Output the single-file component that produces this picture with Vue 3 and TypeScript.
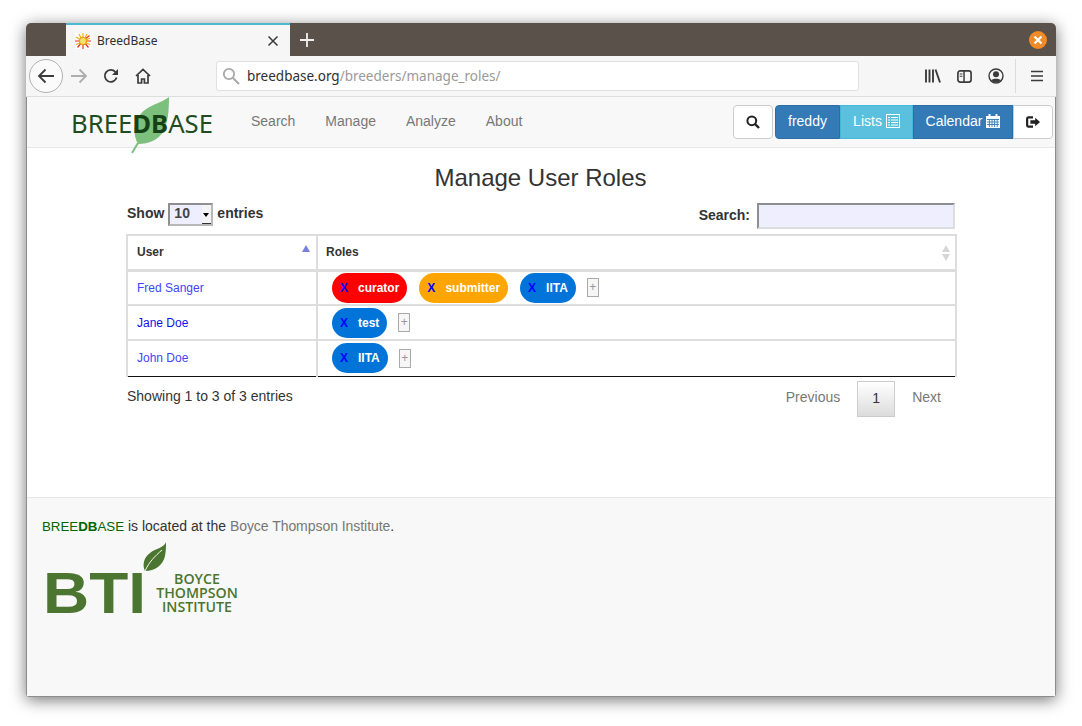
<template>
  <div class="window">
    <div class="titlebar">
      <div class="tab">
        <svg class="favicon" width="16" height="16" viewBox="0 0 16 16">
          <rect width="16" height="16" fill="#fff" />
          <g stroke="#e8321a" stroke-width="1.2">
            <path d="M8 9v7M9 9l4.500 5.500M9 8h7M9 7l5.500-4.500M7 9l-4.500 5.500M7 8H0" />
          </g>
          <g stroke="#f5a81c" stroke-width="1.200">
            <path d="M8 0v6M4 1l2.500 5M12 1L9.500 6M1 4l4 2.500M15 5l-4 2M1 11.500L5 10M15 11.500L11 10" />
          </g>
          <circle cx="8" cy="8" r="3.6" fill="#fbe36a" stroke="#e9a21a" stroke-width="1.400" />
        </svg>
        <span class="tab-title">BreedBase</span>
        <svg class="tab-close" width="12" height="12" viewBox="0 0 12 12">
          <path d="M1.500 1.500l9 9M10.500 1.500l-9 9" stroke="#3a3a3a" stroke-width="1.500" fill="none" />
        </svg>
      </div>
      <svg class="new-tab" width="16" height="16" viewBox="0 0 16 16">
        <path d="M8 1v14M1 8h14" stroke="#f2f0ee" stroke-width="1.800" fill="none" />
      </svg>
      <div class="win-close">
        <svg width="10" height="10" viewBox="0 0 10 10">
          <path d="M1.500 1.500l7 7M8.500 1.500l-7 7" stroke="#fff" stroke-width="2.200" fill="none" />
        </svg>
      </div>
    </div>

    <div class="toolbar">
      <div class="back">
        <svg width="18" height="16" viewBox="0 0 18 16">
          <path d="M17 8H2M8.500 1.500L2 8l6.500 6.500" stroke="#3b3b3b" stroke-width="1.800" fill="none" />
        </svg>
      </div>
      <svg class="forward" width="18" height="16" viewBox="0 0 18 16">
        <path d="M1 8h15M9.500 1.500L16 8l-6.500 6.500" stroke="#adadad" stroke-width="1.800" fill="none" />
      </svg>
      <svg class="reload" width="16" height="16" viewBox="0 0 16 16">
        <path d="M13.600 9.500A6 6 0 1 1 12.400 4L14.600 6" stroke="#3b3b3b" stroke-width="1.800" fill="none" />
        <path d="M15 1v6H9z" fill="#3b3b3b" />
      </svg>
      <svg class="home" width="16" height="16" viewBox="0 0 16 16">
        <path d="M1 8l7-6.500L15 8M3 7v8h3.600v-4h2.800v4H13V7" stroke="#3b3b3b" stroke-width="1.700" fill="none" />
      </svg>
      <div class="urlbar">
        <svg width="18" height="18" viewBox="0 0 18 18">
          <circle cx="7" cy="7" r="5.200" stroke="#a8a8a8" stroke-width="1.800" fill="none" />
          <path d="M11 11l6 6" stroke="#a8a8a8" stroke-width="2" fill="none" />
        </svg>
        <span class="url"><span class="url-host">breedbase.org</span>/breeders/manage_roles/</span>
      </div>
      <svg class="library" width="16" height="16" viewBox="0 0 16 16">
        <path d="M1 1.500v13M4.500 1.500v13M8 1.500v13M10.500 1.500l4.500 13" stroke="#3b3b3b" stroke-width="1.900" fill="none" />
      </svg>
      <svg class="sidebar" width="15" height="13" viewBox="0 0 16 14">
        <rect x=".9" y=".9" width="14.200" height="12.200" rx="2.500" stroke="#3b3b3b" stroke-width="1.800" fill="none" />
        <path d="M7.500 1v12" stroke="#3b3b3b" stroke-width="1.600" />
        <path d="M2.800 4.200h3M2.800 6.700h3" stroke="#3b3b3b" stroke-width="1.100" />
      </svg>
      <svg class="account" width="16" height="16" viewBox="0 0 16 16">
        <circle cx="8" cy="8" r="7" stroke="#3b3b3b" stroke-width="1.400" fill="none" />
        <circle cx="8" cy="6.200" r="3" fill="#3b3b3b" />
        <path d="M3 12.500C4 10 12 10 13 12.500A7 7 0 0 1 3 12.500z" fill="#3b3b3b" />
      </svg>
      <div class="divider"></div>
      <svg class="hamburger" width="14" height="12" viewBox="0 0 14 12">
        <path d="M1 1.500h12M1 6h12M1 10.500h12" stroke="#3b3b3b" stroke-width="1.700" fill="none" />
      </svg>
    </div>

    <div class="page">
      <nav class="navbar">
        <div class="brand">
          <svg class="brand-leaf" width="40" height="58" viewBox="0 0 40 58">
            <path d="M38 0C31 6 16 8 9 18 2 26 2 38 7 47 18 47 27 43 32 35 37 26 38 14 38 0z" fill="#7dbf7d" />
            <path d="M7 46L1 56" stroke="#7dbf7d" stroke-width="2" fill="none" />
          </svg>
          <span class="brand-text">BREE<b>DB</b>ASE</span>
        </div>
        <a v-for="item in menu" :key="item" class="nav-link">{{ item }}</a>
        <div class="nav-right">
          <button class="btn btn-search">
            <svg width="14" height="14" viewBox="0 0 14 14">
              <circle cx="5.800" cy="5.800" r="4.400" stroke="#222" stroke-width="2" fill="none" />
              <path d="M9 9l4 4" stroke="#222" stroke-width="2.400" fill="none" />
            </svg>
          </button>
          <div class="btn-group">
            <button class="btn btn-primary first"><span>freddy</span></button>
            <button class="btn btn-info">
              <span>Lists</span>
              <svg width="14" height="14" viewBox="0 0 14 14">
                <rect x=".5" y=".5" width="13" height="13" fill="none" stroke="#fff" />
                <path d="M2 3.500h2M5 3.500h7M2 6h2M5 6h7M2 8.500h2M5 8.500h7M2 11h2M5 11h7" stroke="#fff" stroke-width="1.200" />
              </svg>
            </button>
            <button class="btn btn-primary calendar">
              <span>Calendar</span>
              <svg width="14" height="14" viewBox="0 0 14 14">
                <path d="M0 2h14v12H0z" fill="#fff" />
                <path d="M3.500 0v3M10.500 0v3" stroke="#fff" stroke-width="2" />
                <path d="M1 5.500h12M1 8h12M1 10.500h12M3.400 5v8M6 5v8M8.600 5v8M11.200 5v8" stroke="#337ab7" stroke-width=".9" />
              </svg>
            </button>
            <button class="btn btn-logout">
              <svg width="16" height="14" viewBox="0 0 16 14">
                <path d="M8 1.800H2.600A1.500 1.500 0 0 0 1.300 3.300v7.400A1.500 1.500 0 0 0 2.600 12.200H8" stroke="#222" stroke-width="2.500" fill="none" />
                <path d="M5 5h5.500V2.200L16 7l-5.500 4.800V9H5z" fill="#222" />
              </svg>
            </button>
          </div>
        </div>
      </nav>

      <main class="content">
        <h1>Manage User Roles</h1>
        <div class="table-controls">
          <label class="length">
            Show
            <span class="select-wrap">
              <select class="length-select">
                <option>10</option>
              </select>
              <span class="select-arrow"></span>
            </span>
            entries
          </label>
          <label class="filter">
            <span class="filter-label">Search:</span>
            <input class="filter-input" type="text" />
          </label>
        </div>

        <table class="roles">
          <thead>
            <tr>
              <th class="col-user">User<span class="sort-up"></span></th>
              <th>Roles<span class="sort-both"></span></th>
            </tr>
          </thead>
          <tbody>
            <tr v-for="row in rows" :key="row.name">
              <td class="user-cell">
                <a :class="{ visited: row.visited }">{{ row.name }}</a>
              </td>
              <td class="role-cell">
                <div class="role-list">
                  <span v-for="role in row.roles" :key="role.label" class="pill" :class="role.kind">
                    <span class="x">X</span>{{ role.label }}
                  </span>
                  <span class="add">+</span>
                </div>
              </td>
            </tr>
          </tbody>
        </table>

        <div class="table-foot">
          <span>Showing 1 to 3 of 3 entries</span>
          <div class="pager">
            <a class="page-link prev">Previous</a>
            <a class="page-current">1</a>
            <a class="page-link next">Next</a>
          </div>
        </div>
      </main>

      <footer class="footer">
        <p class="located">
          <span class="green">BREE<b>DB</b>ASE</span> is located at the <a>Boyce Thompson Institute</a>.
        </p>
        <div class="bti">
          <svg class="bti-leaf" width="26" height="30" viewBox="0 0 26 30">
            <path d="M24 0C22 6 14 6 8 11 2 15 0 23 3 29 13 29 21 23 23 14 24 9 24 4 24 0z" fill="#4b7530" />
            <path d="M3 29C7 20 13 14 20 8" stroke="#f8f8f8" stroke-width="1" fill="none" />
          </svg>
          <svg class="bti-mark" width="110" height="68" viewBox="0 0 110 68">
            <text x="0" y="54" textLength="103" lengthAdjust="spacingAndGlyphs">BTI</text>
          </svg>
          <div class="bti-name">BOYCE<br />THOMPSON<br />INSTITUTE</div>
        </div>
      </footer>
    </div>
  </div>
</template>

<script setup lang="ts">
interface Role {
  label: string
  kind: string
}

interface UserRow {
  name: string
  visited?: boolean
  roles: Role[]
}

const menu = ['Search', 'Manage', 'Analyze', 'About']

const rows: UserRow[] = [
  {
    name: 'Fred Sanger',
    roles: [
      { label: 'curator', kind: 'red' },
      { label: 'submitter', kind: 'orange' },
      { label: 'IITA', kind: 'blue' },
    ],
  },
  { name: 'Jane Doe', visited: true, roles: [{ label: 'test', kind: 'blue' }] },
  { name: 'John Doe', roles: [{ label: 'IITA', kind: 'blue' }] },
]
</script>

<style>
html,
body {
  margin: 0;
  background: #fff;
}
</style>

<style scoped>
.window {
  width: 1030px;
  height: 674px;
  margin: 23px 26px 29px;
  display: flex;
  flex-direction: column;
  border-radius: 5px 5px 3px 3px;
  overflow: hidden;
  box-shadow: 0 3px 16px rgba(0, 0, 0, 0.55);
  font-family: "Liberation Sans", Arial, sans-serif;
  color: #333;
}

.titlebar {
  height: 33px;
  flex: none;
  background: #5a514b;
  display: flex;
  align-items: center;
  padding-left: 40px;
  box-sizing: border-box;
}

.tab {
  width: 224px;
  height: 33px;
  box-sizing: border-box;
  background: #f6f6f6;
  border-top: 2px solid #4cb9cf;
  display: flex;
  align-items: center;
  padding: 0 11px 0 9px;
}

.favicon {
  margin-right: 6px;
}

.tab-title {
  flex: 1;
  font-family: "Noto Sans", sans-serif;
  font-size: 12px;
  color: #2f2f2f;
}

.new-tab {
  margin-left: 9px;
}

.win-close {
  margin-left: auto;
  margin-right: 9px;
  width: 18px;
  height: 18px;
  border-radius: 50%;
  background: #f28a27;
  display: flex;
  align-items: center;
  justify-content: center;
}

.toolbar {
  height: 41px;
  flex: none;
  box-sizing: border-box;
  background: #f6f6f6;
  border-bottom: 1px solid #dedede;
  display: flex;
  align-items: center;
  padding-left: 3px;
}

.back {
  width: 32px;
  height: 32px;
  border: 1px solid #b1b1b1;
  border-radius: 50%;
  background: #fbfbfb;
  display: flex;
  align-items: center;
  justify-content: center;
}

.forward {
  margin-left: 7px;
}

.reload {
  margin-left: 15px;
}

.home {
  margin-left: 16px;
}

.urlbar {
  width: 643px;
  height: 30px;
  box-sizing: border-box;
  margin-left: 65px;
  background: #fff;
  border: 1px solid #e0e0e0;
  border-radius: 3px;
  display: flex;
  align-items: center;
  gap: 7px;
  padding-left: 5px;
}

.url {
  font-family: "Noto Sans", sans-serif;
  font-size: 13.500px;
  color: #9a9a9a;
}

.url-host {
  color: #2f2f2f;
}

.library {
  margin-left: 66px;
}

.sidebar {
  margin-left: 16px;
}

.account {
  margin-left: 16px;
}

.divider {
  width: 1px;
  height: 34px;
  background: #dcdcdc;
  margin-left: 11px;
}

.hamburger {
  margin-left: 14px;
}

.page {
  flex: 1;
  display: flex;
  flex-direction: column;
  background: #fff;
  border-left: 1px solid #8d8d8d;
  border-right: 1px solid #8d8d8d;
  border-bottom: 1px solid #8d8d8d;
}

.navbar {
  height: 51px;
  flex: none;
  box-sizing: border-box;
  background: #f8f8f8;
  border-bottom: 1px solid #e7e7e7;
  display: flex;
  align-items: center;
  padding-left: 45px;
  padding-right: 2px;
}

.brand {
  position: relative;
  width: 164px;
  height: 50px;
  display: flex;
  align-items: center;
}

.brand-leaf {
  position: absolute;
  left: 59px;
  top: 0;
}

.brand-text {
  position: relative;
  font-family: "Noto Sans", sans-serif;
  font-size: 25.700px;
  color: #1f4d1f;
  margin: 2px 0 0 -1px;
}

.brand-text b {
  color: #154215;
}

.nav-link {
  padding: 0 15px;
  font-size: 14px;
  color: #777;
  margin-top: -3px;
}

.nav-right {
  margin-left: auto;
  display: flex;
  gap: 2px;
}

.btn {
  height: 34px;
  box-sizing: border-box;
  border: 1px solid #ccc;
  background: #fff;
  font-family: inherit;
  font-size: 14px;
  color: #fff;
  padding: 0 12px;
  display: flex;
  align-items: center;
  justify-content: center;
  gap: 4px;
}

.btn span {
  margin-top: -3px;
}

.btn svg {
  margin-top: -2px;
}

.btn-search svg,
.btn-logout svg {
  margin-top: 0;
}

.btn-search {
  width: 40px;
  border-radius: 4px;
}

.btn-group {
  display: flex;
}

.btn-primary {
  background: #337ab7;
  border-color: #2e6da4;
}

.first {
  width: 65px;
  border-radius: 4px 0 0 4px;
}

.calendar {
  width: 100px;
  padding: 0;
}

.btn-info {
  width: 73px;
  background: #5bc0de;
  border-color: #46b8da;
}

.btn-logout {
  width: 40px;
  border-radius: 0 4px 4px 0;
}

.content {
  height: 349px;
  flex: none;
  box-sizing: border-box;
  padding: 0 99px 0 100px;
  font-size: 14px;
}

h1 {
  margin: 16px 2px 0 0;
  height: 28px;
  font-size: 24px;
  line-height: 28px;
  font-weight: 400;
  text-align: center;
}

.table-controls {
  height: 31px;
  margin-top: 11px;
  display: flex;
  justify-content: space-between;
  font-weight: 700;
}

.length {
  display: flex;
  align-items: flex-start;
  gap: 4px;
  line-height: 20px;
}

.select-wrap {
  position: relative;
  display: block;
  height: 23px;
}

.length-select {
  appearance: none;
  display: block;
  width: 45px;
  height: 23px;
  box-sizing: border-box;
  border: 2px solid;
  border-color: #8f8f8f #b8b8b8 #b8b8b8 #8f8f8f;
  border-radius: 0;
  background: #eef;
  font-family: inherit;
  font-size: 14px;
  font-weight: 700;
  color: #444;
  padding: 0 0 3px 4px;
}

.select-arrow {
  position: absolute;
  right: 2px;
  top: 2px;
  width: 9px;
  height: 19px;
  background: #f4f4f4;
  border-bottom: 1px solid #333;
  box-sizing: border-box;
}

.select-arrow::after {
  content: "";
  position: absolute;
  left: 1px;
  top: 8px;
  border: 3.500px solid transparent;
  border-top: 4px solid #000;
  border-bottom: 0;
}

.filter {
  display: flex;
  align-items: flex-start;
  align-self: flex-start;
  gap: 7px;
  margin-right: 1px;
}

.filter-label {
  line-height: 24px;
}

.filter-input {
  width: 198px;
  height: 26px;
  box-sizing: border-box;
  border: 2px solid;
  border-color: #8f8f8f #ddd #ddd #8f8f8f;
  background: #eef;
  padding: 0;
}

.roles {
  width: 831px;
  margin-left: -1px;
  border-collapse: collapse;
  table-layout: fixed;
  font-size: 12px;
}

.roles th {
  position: relative;
  height: 35px;
  box-sizing: border-box;
  padding: 0 8px;
  text-align: left;
  font-weight: 700;
  border: 2px solid #ddd;
  border-bottom-width: 3px;
}

.roles .col-user {
  width: 190px;
  padding-left: 9px;
}

.roles td {
  height: 35px;
  box-sizing: border-box;
  padding: 0 8px;
  border: 2px solid #ddd;
}

.roles .user-cell {
  padding-left: 9px;
}

.roles tbody tr:last-child td {
  height: 36px;
  border-bottom: 1px solid #111;
}

.sort-up {
  position: absolute;
  right: 6px;
  top: 9px;
  border: 4.500px solid transparent;
  border-bottom: 7px solid #7a7fdc;
  border-top: 0;
}

.sort-both {
  position: absolute;
  right: 4px;
  top: 9px;
  width: 9px;
  height: 16px;
}

.sort-both::before,
.sort-both::after {
  content: "";
  position: absolute;
  left: 0;
  border: 4.500px solid transparent;
}

.sort-both::before {
  top: 0;
  border-top: 0;
  border-bottom: 7px solid #d6d6d6;
}

.sort-both::after {
  bottom: 0;
  border-bottom: 0;
  border-top: 7px solid #d6d6d6;
}

.user-cell a {
  color: #4444ff;
}

.user-cell a.visited {
  color: #1111ee;
}

.role-list {
  display: flex;
  align-items: center;
  gap: 12px;
  padding-left: 6px;
}

.pill {
  height: 30px;
  box-sizing: border-box;
  border-radius: 15px;
  padding: 0 8px;
  display: flex;
  align-items: center;
  font-weight: 700;
  color: #fff;
}

.pill .x {
  color: #00f;
  margin-right: 10px;
}

.red {
  background: #f00;
}

.orange {
  background: #ffa500;
}

.blue {
  background: #0074d9;
}

.add {
  width: 10px;
  height: 17px;
  box-sizing: content-box;
  border: 1px solid #aaa;
  background: #f6f6f6;
  color: #999;
  font-size: 12px;
  line-height: 16px;
  text-align: center;
  margin-left: -1px;
}

.table-foot {
  display: flex;
  justify-content: space-between;
  align-items: flex-start;
  margin-top: 4px;
}

.table-foot > span {
  line-height: 31px;
}

.pager {
  display: flex;
  align-items: flex-start;
}

.page-link {
  color: #777;
  line-height: 32px;
}

.prev {
  padding: 0 17px;
}

.next {
  padding: 0 15px 0 17px;
}

.page-current {
  width: 38px;
  height: 36px;
  box-sizing: border-box;
  border: 1px solid #ccc;
  background: linear-gradient(#fff, #dcdcdc);
  text-align: center;
  line-height: 32px;
  color: #333;
}

.footer {
  flex: 1;
  box-sizing: border-box;
  background: #f8f8f8;
  border-top: 1px solid #e7e7e7;
  padding: 20px 15px 0;
  font-size: 14px;
}

.located {
  margin: 0;
  line-height: 16px;
}

.green {
  color: #060;
  font-size: 13.300px;
}

.located a {
  color: #777;
  letter-spacing: -0.05px;
}

.bti {
  position: relative;
  height: 90px;
}

.bti-leaf {
  position: absolute;
  left: 100px;
  top: 7px;
}

.bti-mark {
  position: absolute;
  left: 1px;
  top: 24px;
}

.bti-mark text {
  font-family: "Liberation Sans", sans-serif;
  font-size: 58px;
  font-weight: 700;
  fill: #4b7530;
}

.bti-name {
  position: absolute;
  left: 114px;
  top: 37px;
  width: 82px;
  text-align: center;
  font-family: "Open Sans", sans-serif;
  font-weight: 600;
  font-size: 14.200px;
  line-height: 14px;
  color: #4b7530;
}
</style>
